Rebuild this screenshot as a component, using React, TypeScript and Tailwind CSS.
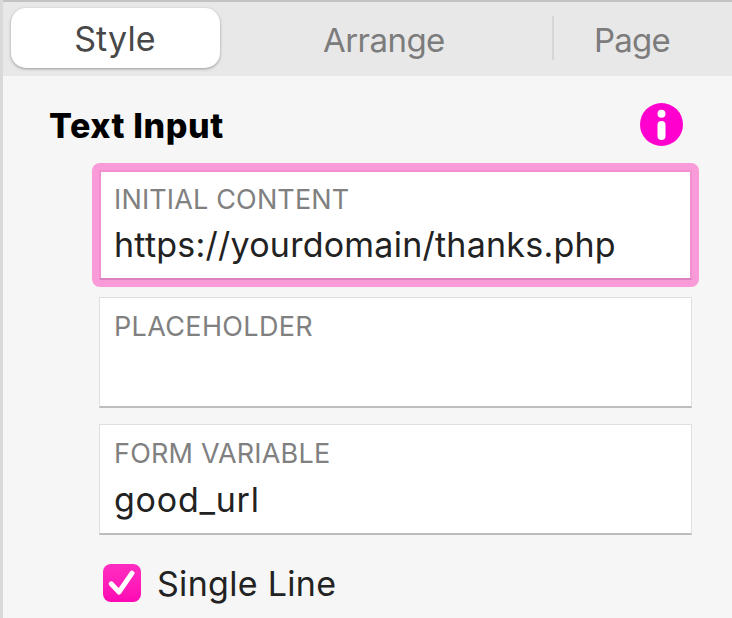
import React from 'react';
import clsx from 'clsx';

interface FieldProps {
  label: string;
  value?: string;
  focused?: boolean;
  labelClass?: string;
  valueClass?: string;
}

const Field: React.FC<FieldProps> = ({ label, value, focused, labelClass, valueClass }) => {
  const box = (
    <div
      className={clsx(
        'w-[593px] bg-white',
        focused
          ? 'h-[110px] border-2 border-[#f28fd0] border-b-[#dd80be] pl-[13px] pt-3'
          : 'h-[111px] border border-[#dfdfdf] border-b-2 border-b-[#bdbdbd] pl-[14px] pt-[13px]',
      )}
    >
      <div className={clsx('h-8 leading-8 text-[27px] text-[#808080] whitespace-nowrap', labelClass)}>{label}</div>
      {value && (
        <div className={clsx('h-10 leading-10 text-[34px] text-[#222222] whitespace-nowrap', focused ? 'mt-[9px]' : 'mt-[10px]', valueClass)}>
          {value}
        </div>
      )}
    </div>
  );

  // focus ring sits outside the field without moving its neighbours
  return focused ? (
    <div className="-mb-[6px] -ml-[7px] -mt-[7px] h-[124px] w-[607px] rounded-[8px] bg-[#f99bd8] p-[7px]">{box}</div>
  ) : (
    box
  );
};

const InfoIcon = () => (
  <svg width="43" height="43" viewBox="0 0 43 43">
    <circle cx="21.5" cy="21.5" r="21.5" fill="#ff00cf" />
    <circle cx="21.5" cy="10.8" r="4" fill="#fff" />
    <rect x="17.5" y="18" width="8" height="19" rx="4" fill="#fff" />
  </svg>
);

const Checkbox = () => (
  <span className="flex h-[38px] w-[38px] items-center justify-center rounded-[8px] bg-linear-to-b from-[#ff2cc0] to-[#ff06b4]">
    <svg width="38" height="38" viewBox="0 0 38 38" fill="none">
      <path d="M8.2 19.8L16 28L29 9.2" stroke="#fff" strokeWidth="5" strokeLinecap="round" strokeLinejoin="round" />
    </svg>
  </span>
);

export default function App() {
  return (
    <div className="h-[618px] w-[732px] overflow-hidden border-l-[3px] border-[#d9d9d9] bg-[#f6f6f6] font-['Inter',sans-serif]">
      <div className="flex h-[76px] border-t-2 border-t-[#c3c3c3] bg-[#e8e8e8]">
        <div className="ml-2 mt-[6px] flex h-[60px] w-[209px] items-center justify-center rounded-[15px] bg-white pr-px pt-[2px] shadow-[0_1px_3px_rgba(0,0,0,0.35)]">
          <span className="text-[34px] leading-10 tracking-[0.15px] text-[#484848]">Style</span>
        </div>
        <div className="ml-[103px] mt-[18px] w-[229px] text-[33px] leading-10 tracking-[-0.55px] text-[#7c7c7c]">
          <span>Arrange</span>
        </div>
        <div className="mt-[14px] h-[44px] w-[2px] bg-[#d6d6d6]" />
        <div className="ml-[40px] mt-[18px] text-[33px] leading-10 tracking-[-0.8px] text-[#7c7c7c]">
          <span>Page</span>
        </div>
      </div>

      <div className="flex items-center justify-between pl-[46px] pr-[49px] pt-[27px]">
        <h1 className="pt-[2px] text-[34px] font-extrabold leading-10 tracking-[0.6px] text-black">
          <span>Text Input</span>
        </h1>
        <InfoIcon />
      </div>

      <div className="ml-24 mt-6 flex flex-col gap-4">
        <Field
          label="INITIAL CONTENT"
          value="https://yourdomain/thanks.php"
          labelClass="tracking-[0.15px]"
          valueClass="tracking-[0.24px]"
          focused
        />
        <Field label="PLACEHOLDER" labelClass="tracking-[0.35px]" />
        <Field label="FORM VARIABLE" value="good_url" labelClass="tracking-[0.2px]" valueClass="tracking-[0.75px]" />
      </div>

      <label className="ml-[100px] mt-[29px] flex items-center gap-4">
        <Checkbox />
        <span className="pt-px text-[34px] leading-9 tracking-[0.3px] text-[#222222]">Single Line</span>
      </label>
    </div>
  );
}
